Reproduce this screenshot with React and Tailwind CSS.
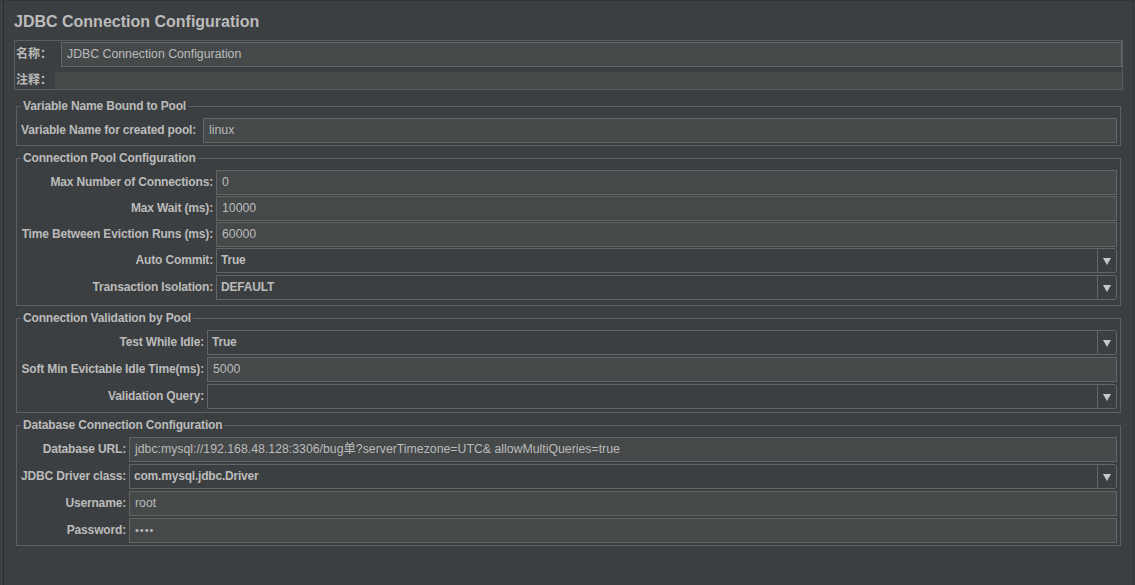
import React from "react";

function TextField({ value, className = "", extra = "" }) {
  return (
    <div
      className={
        "flex-1 min-w-0 h-[25px] flex items-center border border-[#646464] bg-[#45494a] pl-[5px] pb-[1px] text-[12.3px] leading-[14px] text-[#bbbbbb] whitespace-nowrap overflow-hidden " +
        className
      }
    >
      <span className={extra}>{value}</span>
    </div>
  );
}

function Combo({ value }) {
  return (
    <div className="flex-1 min-w-0 h-[25px] flex items-stretch border border-[#646464] rounded-r-[3px] bg-[#3c3f41]">
      <div className="flex-1 flex items-center pl-[4px] pb-[1px] text-[12px] leading-[14px] font-bold tracking-[-0.2px] text-[#bbbbbb] whitespace-nowrap">
        {value}
      </div>
      <div className="w-[19px] border-l border-[#646464] flex items-center justify-center pt-[1px]">
        <svg width="8" height="7" viewBox="0 0 8 7">
          <path d="M0 0H8L4 7Z" fill="#c8c8c8" />
        </svg>
      </div>
    </div>
  );
}

function Label({ children, className = "" }) {
  return (
    <div
      className={
        "shrink-0 pb-[1px] text-[12px] leading-[14px] font-bold tracking-[-0.16px] text-[#bbbbbb] whitespace-nowrap " +
        className
      }
    >
      {children}
    </div>
  );
}

function Box({ title, className = "", innerClass = "", children }) {
  return (
    <fieldset className={"mx-[2px] border border-[#5d6062] " + className}>
      <legend className="ml-[4px] px-[2px] h-[14px] leading-[14px] text-[12px] font-bold tracking-[-0.16px] text-[#bbbbbb]">
        {title}
      </legend>
      <div className={"pl-[4px] pr-[3px] pt-[5px] " + innerClass}>{children}</div>
    </fieldset>
  );
}

function Row({ label, labelClass, className = "", children }) {
  return (
    <div className={"flex items-center gap-[3px] " + className}>
      <Label className={labelClass}>{label}</Label>
      {children}
    </div>
  );
}

export default function App() {
  return (
    <div className="w-[1135px] h-[585px] bg-[#3c3f41] flex overflow-hidden font-['Liberation_Sans',Arial,'Noto_Sans_CJK_SC',sans-serif] text-[#bbbbbb]">
      <div className="w-[3px] shrink-0" />
      <div className="w-[1px] shrink-0 bg-[#2b2b2b]" />
      <div className="flex-1 min-w-0 border-t border-[#323436] pl-[10px] pr-[10px] flex flex-col">
        <div className="mt-[12px] h-[18px] leading-[18px] text-[16px] font-bold text-[#bbbbbb] whitespace-nowrap">
          JDBC Connection Configuration
        </div>

        <div className="mt-[9px] border border-[#5b5e60] pl-[1px] pt-[1px]">
          <div className="flex items-center h-[25px]">
            <Label className="w-[45px] tracking-normal">名称：</Label>
            <TextField value="JDBC Connection Configuration" />
          </div>
          <div className="flex items-center h-[17px] mt-[5px]">
            <Label className="w-[39px] tracking-normal">注释：</Label>
            <div className="flex-1 h-[17px] bg-[#45494a]" />
          </div>
        </div>

        <Box title="Variable Name Bound to Pool" className="mt-[9px]" innerClass="pb-[2px]">
          <Row label="Variable Name for created pool:" labelClass="w-[179px]">
            <TextField value="linux" />
          </Row>
        </Box>

        <Box title="Connection Pool Configuration" className="mt-[5px]" innerClass="pb-[5px]">
          <Row label="Max Number of Connections:" labelClass="w-[192px] text-right">
            <TextField value="0" />
          </Row>
          <Row label="Max Wait (ms):" labelClass="w-[192px] text-right" className="mt-[1px]">
            <TextField value="10000" />
          </Row>
          <Row label="Time Between Eviction Runs (ms):" labelClass="w-[192px] text-right" className="mt-[1px]">
            <TextField value="60000" />
          </Row>
          <Row label="Auto Commit:" labelClass="w-[192px] text-right" className="mt-[1px]">
            <Combo value="True" />
          </Row>
          <Row label="Transaction Isolation:" labelClass="w-[192px] text-right" className="mt-[2px]">
            <Combo value="DEFAULT" />
          </Row>
        </Box>

        <Box title="Connection Validation by Pool" className="mt-[5px]" innerClass="pb-[3px]">
          <Row label="Test While Idle:" labelClass="w-[183px] text-right">
            <Combo value="True" />
          </Row>
          <Row label="Soft Min Evictable Idle Time(ms):" labelClass="w-[183px] text-right" className="mt-[2px]">
            <TextField value="5000" />
          </Row>
          <Row label="Validation Query:" labelClass="w-[183px] text-right" className="mt-[2px]">
            <Combo value="" />
          </Row>
        </Box>

        <Box title="Database Connection Configuration" className="mt-[5px]" innerClass="pb-[2px]">
          <Row label="Database URL:" labelClass="w-[105px] text-right">
            <TextField value="jdbc:mysql://192.168.48.128:3306/bug单?serverTimezone=UTC& allowMultiQueries=true" />
          </Row>
          <Row label="JDBC Driver class:" labelClass="w-[105px] text-right" className="mt-[2px]">
            <Combo value="com.mysql.jdbc.Driver" />
          </Row>
          <Row label="Username:" labelClass="w-[105px] text-right" className="mt-[2px]">
            <TextField value="root" />
          </Row>
          <Row label="Password:" labelClass="w-[105px] text-right" className="mt-[2px]">
            <TextField value="••••" className="h-[24px]" extra="text-[11px] tracking-[1px]" />
          </Row>
        </Box>
      </div>
      <div className="w-[2px] shrink-0 border-l border-[#333537]" />
    </div>
  );
}
